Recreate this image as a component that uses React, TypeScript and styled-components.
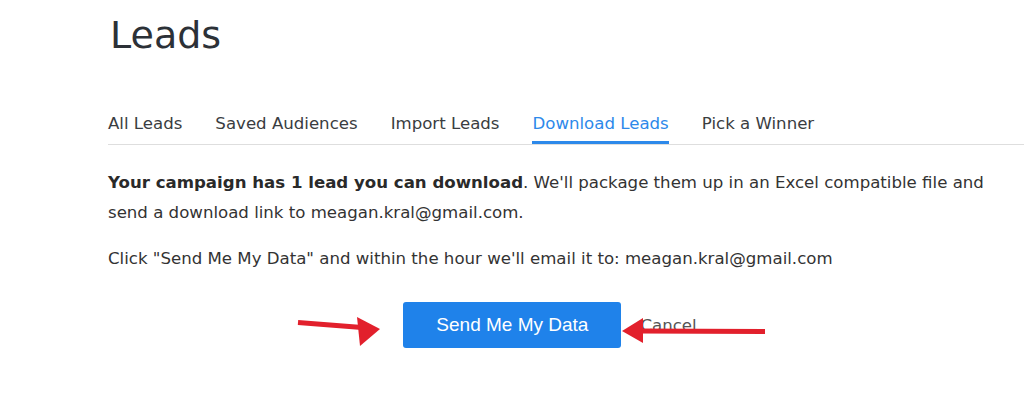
import styled, { createGlobalStyle } from 'styled-components';

const GlobalStyle = createGlobalStyle`
  body {
    margin: 0;
    background: #ffffff;
    font-family: "DejaVu Sans", Verdana, sans-serif;
    color: #333333;
  }
`;

const Page = styled.div`
  position: relative;
  width: 1024px;
  height: 411px;
  overflow: hidden;
  padding-left: 108px;
  box-sizing: border-box;
`;

const Title = styled.h1`
  margin: 12px 0 0 2px;
  font-size: 38px;
  line-height: 46px;
  font-weight: 400;
  color: #2c3137;
`;

const TabBar = styled.nav`
  display: flex;
  gap: 33px;
  margin-top: 54px;
  border-bottom: 1px solid #dedede;
`;

const Tab = styled.a<{ active?: boolean }>`
  font-size: 16.6px;
  line-height: 24px;
  padding-bottom: 5px;
  border-bottom: 3px solid ${props => props.active ? '#2d89ea' : 'transparent'};
  color: ${props => props.active ? '#2d89ea' : '#3a3d41'};
  text-decoration: none;
  cursor: pointer;
`;

const Body = styled.div`
  width: 884px;
  padding-top: 23px;
`;

const Paragraph = styled.p`
  margin: 0 0 16px;
  font-size: 16.6px;
  line-height: 30px;
  color: #333333;

  strong {
    font-weight: 700;
    color: #2a2a2a;
  }
`;

const Actions = styled.div`
  display: flex;
  justify-content: center;
  align-items: center;
  gap: 19px;
  margin-top: 28px;
`;

const PrimaryButton = styled.button`
  width: 218px;
  height: 46px;
  border: none;
  border-radius: 3px;
  background: #1f82ea;
  color: #ffffff;
  font-family: "Liberation Sans", Arial, sans-serif;
  font-size: 19px;
  cursor: pointer;
`;

const CancelLink = styled.a`
  font-size: 16.6px;
  color: #555555;
  cursor: pointer;
`;

const Annotation = styled.svg`
  position: absolute;
  left: 0;
  top: 0;
  pointer-events: none;
`;

const tabs = ['All Leads', 'Saved Audiences', 'Import Leads', 'Download Leads', 'Pick a Winner'];

export default function App() {
  const email = 'meagan.kral@gmail.com';
  return (
    <Page>
      <GlobalStyle />
      <Title>Leads</Title>
      <TabBar>
        {tabs.map(t => (
          <Tab key={t} active={t === 'Download Leads'}>{t}</Tab>
        ))}
      </TabBar>
      <Body>
        <Paragraph>
          <strong>Your campaign has 1 lead you can download</strong>. We'll package them up in an Excel compatible file and send a download link to {email}.
        </Paragraph>
        <Paragraph>
          Click "Send Me My Data" and within the hour we'll email it to: {email}
        </Paragraph>
        <Actions>
          <PrimaryButton>Send Me My Data</PrimaryButton>
          <CancelLink>Cancel</CancelLink>
        </Actions>
      </Body>
      <Annotation width="1024" height="411" viewBox="0 0 1024 411">
        <line x1="298" y1="322.5" x2="362" y2="327.5" stroke="#e2202c" strokeWidth="5" />
        <polygon points="357,317 380,329 360,346" fill="#e2202c" />
        <line x1="765" y1="331.5" x2="638" y2="331" stroke="#e2202c" strokeWidth="5" />
        <polygon points="643,318 622,331 643,343" fill="#e2202c" />
      </Annotation>
    </Page>
  );
}
